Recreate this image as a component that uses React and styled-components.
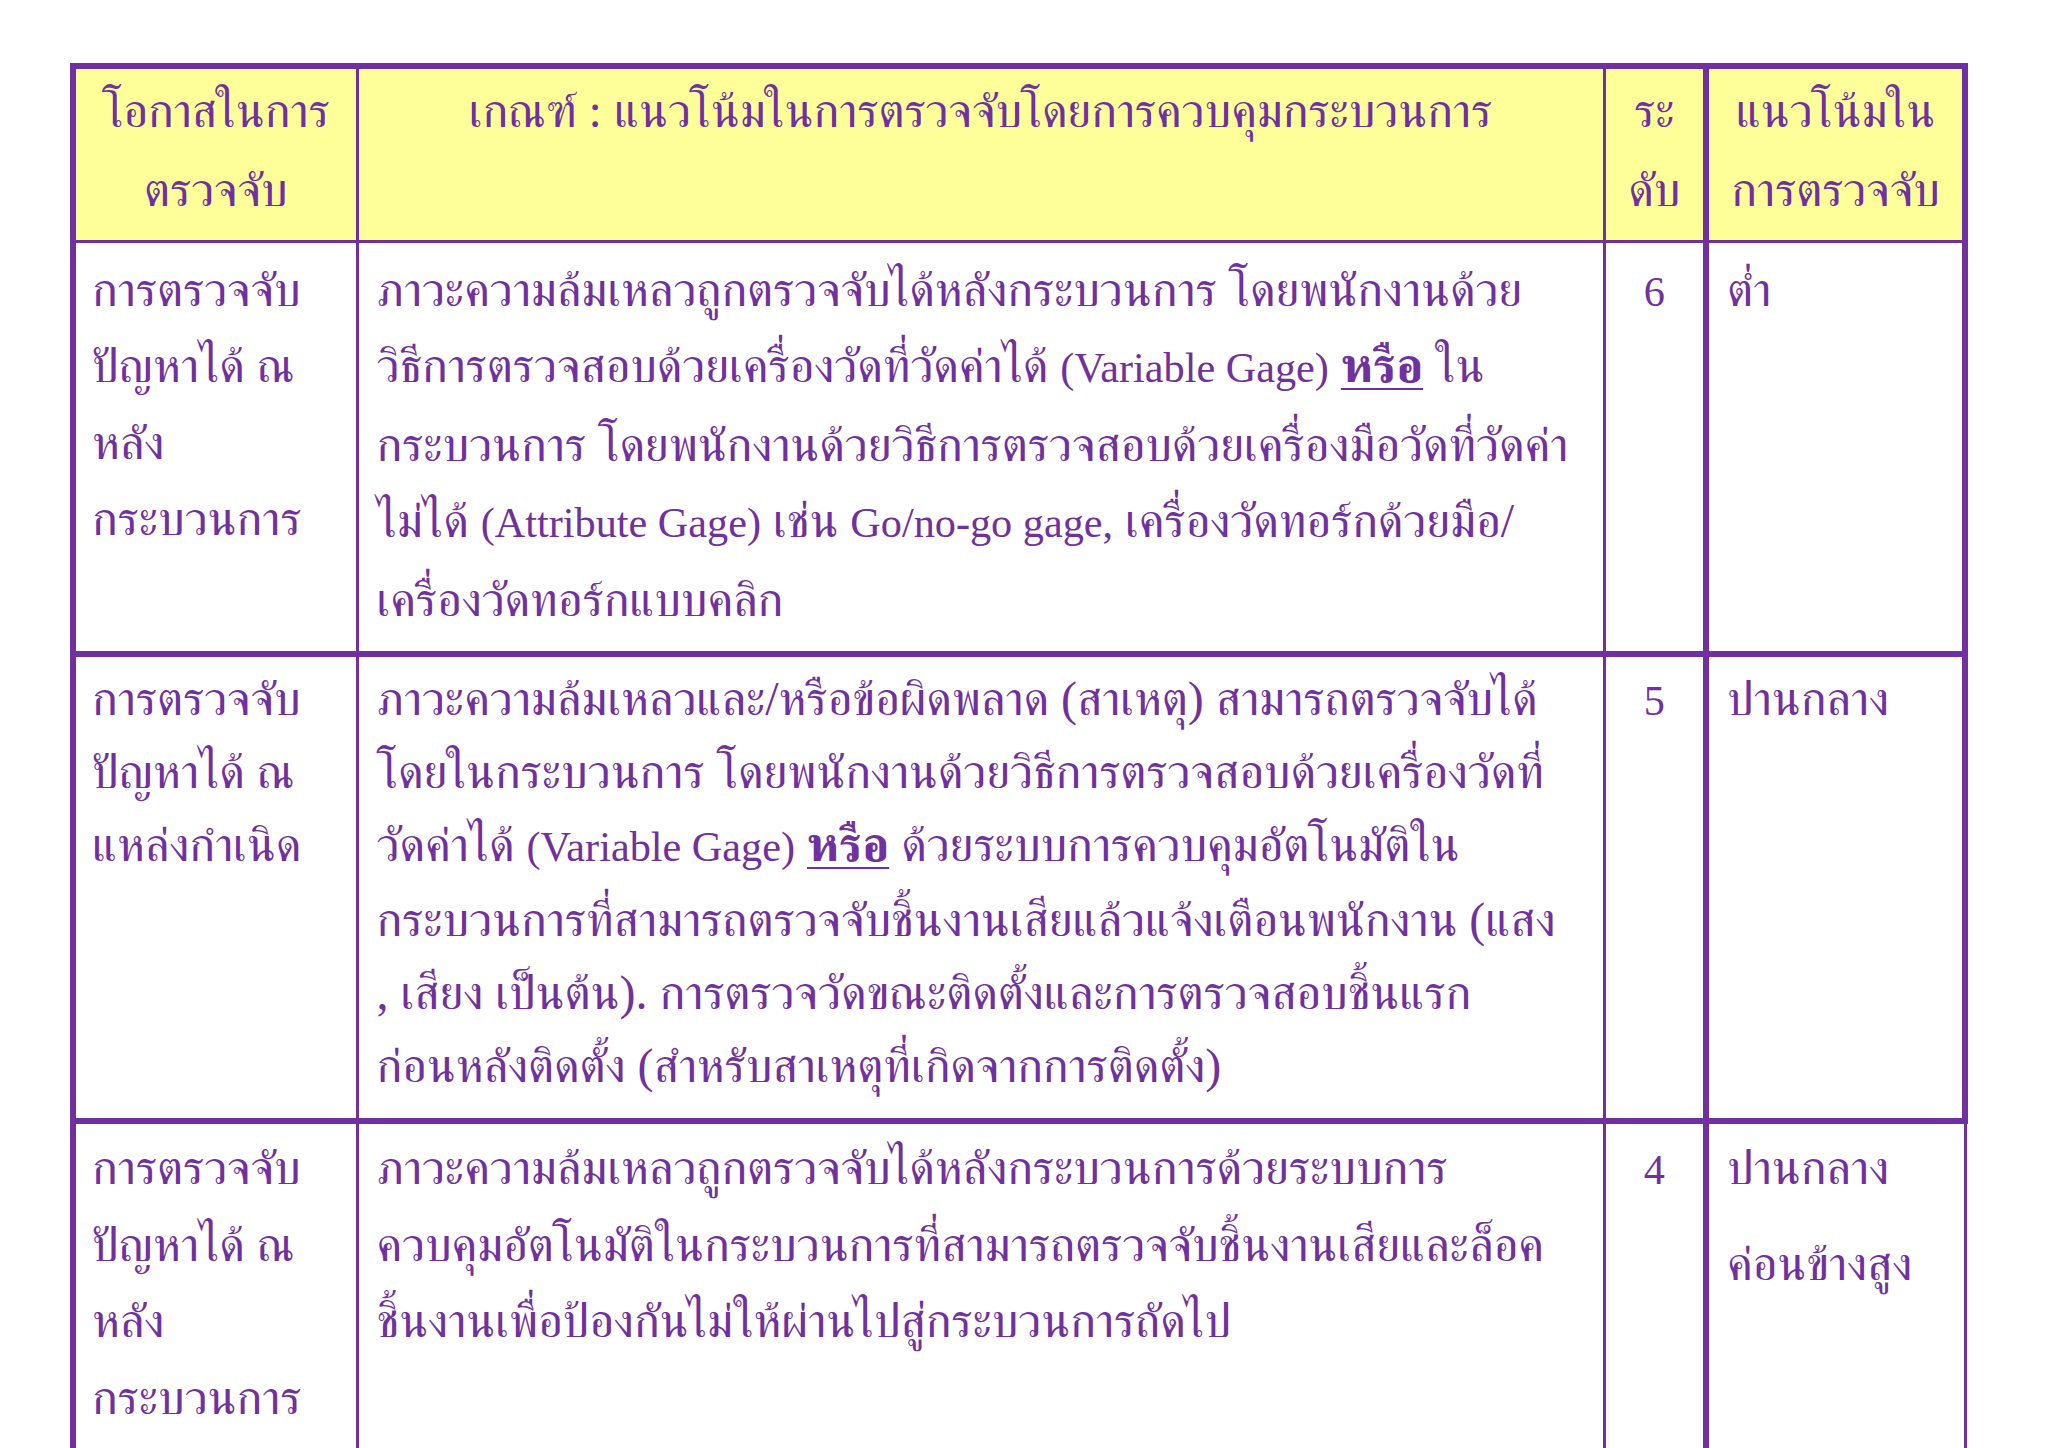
import React from "react";
import styled, { createGlobalStyle } from "styled-components";

const PURPLE = "#7030a0";
const THICK = "6px";
const THIN = "3px";

const Global = createGlobalStyle`
  html, body { margin: 0; padding: 0; background: #ffffff; }
  body { font-family: "Liberation Serif", "FreeSerif", serif; color: ${PURPLE}; }
`;

const Page = styled.div`
  padding: 63px 0 0 70px;
`;

const Table = styled.table`
  border-collapse: collapse;
  table-layout: fixed;
  width: 1892px;
  font-size: 48px;
`;

const Col = styled.col`
  width: ${(p) => p.$w}px;
`;

const Row = styled.tr`
  height: ${(p) => p.$h}px;
`;

const Cell = styled.td`
  vertical-align: top;
  white-space: nowrap;
  padding: ${(p) => p.$pt ?? 5}px ${(p) => p.$pr ?? 10}px 0 ${(p) => p.$pl ?? 18}px;
  line-height: ${(p) => p.$lh}px;
  text-align: ${(p) => (p.$center ? "center" : "left")};
  background: ${(p) => (p.$head ? "#ffff99" : "#ffffff")};
  border-left: ${(p) => p.$bl ?? THIN} solid ${PURPLE};
  border-right: ${(p) => p.$br ?? THIN} solid ${PURPLE};
  border-top: ${(p) => p.$bt ?? THIN} solid ${PURPLE};
  border-bottom: ${(p) => p.$bb ?? THIN} solid ${PURPLE};
`;

const Line = styled.div`
  margin-top: ${(p) => p.$gap ?? 0}px;
`;

const Lat = styled.span`
  font-size: 0.88em;
`;

const Strong = styled.span`
  font-weight: bold;
  text-decoration: underline;
  text-decoration-thickness: 2px;
  text-underline-offset: 6px;
`;

const Lines = ({ lines, gap = 0 }) =>
  lines.map((l, i) => (
    <Line key={i} $gap={i > 0 ? gap : 0}>
      {l}
    </Line>
  ));

const rows = [
  {
    h: 413,
    lh: 76.5,
    pt: 9,
    bb: THICK,
    rightBorder: THICK,
    opp: ["การตรวจจับ", "ปัญหาได้ ณ", "หลัง", "กระบวนการ"],
    crit: [
      "ภาวะความล้มเหลวถูกตรวจจับได้หลังกระบวนการ โดยพนักงานด้วย",
      <>วิธีการตรวจสอบด้วยเครื่องวัดที่วัดค่าได้ <Lat>(Variable Gage)</Lat> <Strong>หรือ</Strong> ใน</>,
      "กระบวนการ โดยพนักงานด้วยวิธีการตรวจสอบด้วยเครื่องมือวัดที่วัดค่า",
      <>ไม่ได้ <Lat>(Attribute Gage)</Lat> เช่น <Lat>Go/no-go gage,</Lat> เครื่องวัดทอร์กด้วยมือ/</>,
      "เครื่องวัดทอร์กแบบคลิก",
    ],
    level: "6",
    trend: ["ต่ำ"],
    trendGap: 0,
  },
  {
    h: 467,
    lh: 73,
    pt: 5,
    bb: THICK,
    rightBorder: THICK,
    opp: ["การตรวจจับ", "ปัญหาได้ ณ", "แหล่งกำเนิด"],
    crit: [
      "ภาวะความล้มเหลวและ/หรือข้อผิดพลาด (สาเหตุ) สามารถตรวจจับได้",
      "โดยในกระบวนการ โดยพนักงานด้วยวิธีการตรวจสอบด้วยเครื่องวัดที่",
      <>วัดค่าได้ <Lat>(Variable Gage)</Lat> <Strong>หรือ</Strong> ด้วยระบบการควบคุมอัตโนมัติใน</>,
      "กระบวนการที่สามารถตรวจจับชิ้นงานเสียแล้วแจ้งเตือนพนักงาน (แสง",
      ", เสียง เป็นต้น). การตรวจวัดขณะติดตั้งและการตรวจสอบชิ้นแรก",
      "ก่อนหลังติดตั้ง (สำหรับสาเหตุที่เกิดจากการติดตั้ง)",
    ],
    level: "5",
    trend: ["ปานกลาง"],
    trendGap: 0,
  },
  {
    h: 420,
    lh: 76.5,
    pt: 6,
    bb: THIN,
    rightBorder: THIN,
    opp: ["การตรวจจับ", "ปัญหาได้ ณ", "หลัง", "กระบวนการ"],
    crit: [
      "ภาวะความล้มเหลวถูกตรวจจับได้หลังกระบวนการด้วยระบบการ",
      "ควบคุมอัตโนมัติในกระบวนการที่สามารถตรวจจับชิ้นงานเสียและล็อค",
      "ชิ้นงานเพื่อป้องกันไม่ให้ผ่านไปสู่กระบวนการถัดไป",
    ],
    level: "4",
    trend: ["ปานกลาง", "ค่อนข้างสูง"],
    trendGap: 19,
  },
];

export default function App() {
  return (
    <>
      <Global />
      <Page>
        <Table>
          <colgroup>
            <Col $w={284} />
            <Col $w={1247} />
            <Col $w={102} />
            <Col $w={259} />
          </colgroup>
          <thead>
            <Row $h={175}>
              <Cell $head $center $lh={79} $pt={2} $pl={8} $pr={8} $bl={THICK} $bt={THICK}>
                <Lines lines={["โอกาสในการ", "ตรวจจับ"]} />
              </Cell>
              <Cell $head $center $lh={79} $pt={2} $pl={8} $pr={8} $bt={THICK}>
                เกณฑ์ : แนวโน้มในการตรวจจับโดยการควบคุมกระบวนการ
              </Cell>
              <Cell $head $center $lh={79} $pt={2} $pl={4} $pr={4} $bt={THICK} $br={THICK}>
                <Lines lines={["ระ", "ดับ"]} />
              </Cell>
              <Cell $head $center $lh={79} $pt={2} $pl={8} $pr={8} $bl={THICK} $bt={THICK} $br={THICK}>
                <Lines lines={["แนวโน้มใน", "การตรวจจับ"]} />
              </Cell>
            </Row>
          </thead>
          <tbody>
            {rows.map((r, i) => (
              <Row key={i} $h={r.h}>
                <Cell $lh={r.lh} $pt={r.pt} $bl={THICK} $bb={r.bb} $pl={16}>
                  <Lines lines={r.opp} />
                </Cell>
                <Cell $lh={r.lh} $pt={r.pt} $bb={r.bb} $pl={18}>
                  <Lines lines={r.crit} />
                </Cell>
                <Cell $lh={r.lh} $pt={r.pt} $center $bb={r.bb} $br={THICK} $pl={4} $pr={4}>
                  <Lat>{r.level}</Lat>
                </Cell>
                <Cell $lh={r.lh} $pt={r.pt} $bl={THICK} $br={r.rightBorder} $bb={r.bb} $pl={18}>
                  <Lines lines={r.trend} gap={r.trendGap} />
                </Cell>
              </Row>
            ))}
          </tbody>
        </Table>
      </Page>
    </>
  );
}
